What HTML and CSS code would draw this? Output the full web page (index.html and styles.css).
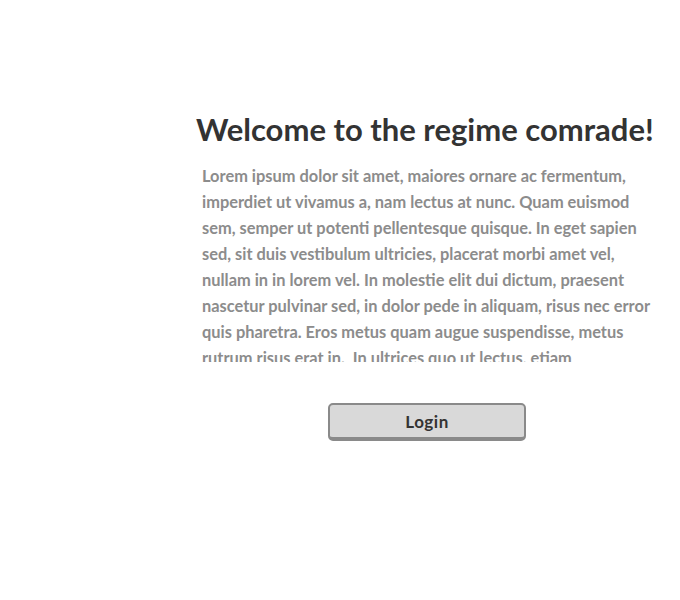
FILE: index.html
```html
<!DOCTYPE html>
<html>
<head>
<meta charset="utf-8">
<link rel="stylesheet" href="styles.css">
</head>
<body>
<main class="panel">
  <h1 class="title">Welcome to the regime comrade!</h1>
  <p class="intro">Lorem ipsum dolor sit amet, maiores ornare ac fermentum,<br>imperdiet ut vivamus a, nam lectus at nunc. Quam euismod<br>sem, semper ut potenti pellentesque quisque. In eget sapien<br>sed, sit duis vestibulum ultricies, placerat morbi amet vel,<br>nullam in in lorem vel. In molestie elit dui dictum, praesent<br>nascetur pulvinar sed, in dolor pede in aliquam, risus nec error<br>quis pharetra. Eros metus quam augue suspendisse, metus<br>rutrum risus erat in. &nbsp;In ultrices quo ut lectus, etiam<br>vulputate nulla sit amet mauris lorem ipsum dolor.</p>
  <div class="actions">
    <button class="login">Login</button>
  </div>
</main>
</body>
</html>
```

FILE: styles.css
```css
html, body {
  margin: 0;
  padding: 0;
  background: #ffffff;
}
body {
  font-family: Lato, "Open Sans", sans-serif;
}
.panel {
  width: 462px;
  margin-left: 196px;
  padding-top: 111px;
  display: flex;
  flex-direction: column;
}
.title {
  margin: 0;
  font-size: 31px;
  line-height: 36px;
  font-weight: 700;
  color: #333333;
  white-space: nowrap;
}
.intro {
  margin: 16px 0 0 6px;
  width: 460px;
  height: 199px;
  overflow: hidden;
  white-space: nowrap;
  font-size: 16.4px;
  line-height: 26px;
  font-weight: 700;
  color: #8c8c8c;
}
.actions {
  display: flex;
  justify-content: center;
  margin-top: 41px;
}
.login {
  width: 198px;
  height: 38px;
  border: 2px solid #8a8a8a;
  border-bottom-width: 4px;
  border-radius: 5px;
  background: #d9d9d9;
  color: #333333;
  font-family: Lato, sans-serif;
  font-weight: 700;
  font-size: 17px;
  letter-spacing: 0.5px;
  padding: 0;
}
```
